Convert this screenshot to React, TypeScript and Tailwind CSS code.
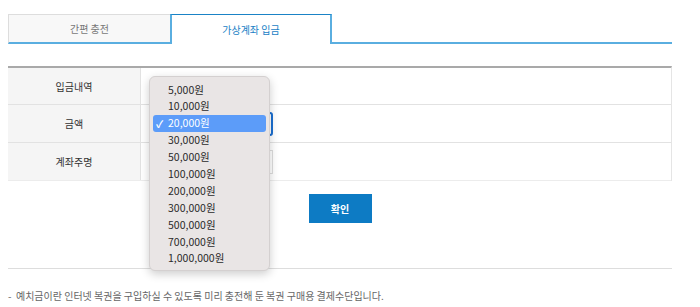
import React from 'react';

const amounts = ['5,000원', '10,000원', '20,000원', '30,000원', '50,000원', '100,000원', '200,000원', '300,000원', '500,000원', '700,000원', '1,000,000원'];

const font = { fontFamily: '"Noto Sans CJK KR", "Noto Sans", sans-serif' };

const App: React.FC = () => {
    return (
        <div className="relative w-[700px] h-[307px] bg-white text-[10px] text-[#333]" style={font}>
            <div className="px-2 pt-[14px]">
                {/* tabs */}
                <div className="flex w-[664px] h-[30px]">
                    <div className="w-[162px] flex items-center justify-center bg-[#f8f8f8] border-t border-l border-[#dddddd] border-b-2 border-b-[#5aaee0] text-[#777]">간편 충전</div>
                    <div className="w-[162px] flex items-center justify-center bg-white border-t border-t-[#1a83c6] border-x-2 border-x-[#5aaee0] text-[#1a7fc6]">가상계좌 입금</div>
                    <div className="flex-1 border-b-2 border-b-[#5aaee0]"></div>
                </div>

                {/* table */}
                <div className="mt-[22px] w-[664px] border-t-2 border-t-[#a9a9a9] border-r border-r-[#e5e5e5]">
                    <div className="flex h-[37px] border-b border-[#e2e2e2]">
                        <div className="w-[133px] flex items-center justify-center bg-[#f5f5f5] border-r border-[#e2e2e2]">입금내역</div>
                        <div className="flex-1"></div>
                    </div>
                    <div className="flex h-[38px] border-b border-[#e2e2e2]">
                        <div className="w-[133px] flex items-center justify-center bg-[#f5f5f5] border-r border-[#e2e2e2]">금액</div>
                        <div className="flex-1 flex items-center pl-[8px]">
                            <div className="w-[124px] h-[24px] border-2 border-[#1b6fd1] rounded-[3px]"></div>
                        </div>
                    </div>
                    <div className="flex h-[38px] border-b border-[#ececec]">
                        <div className="w-[133px] flex items-center justify-center bg-[#f5f5f5] border-r border-[#e2e2e2]">계좌주명</div>
                        <div className="flex-1 flex items-center pl-[8px]">
                            <div className="w-[124px] h-[24px] border border-[#dddddd]"></div>
                        </div>
                    </div>
                </div>

                <div className="flex justify-center w-[664px] mt-[13px]">
                    <button className="w-[63px] h-[29px] bg-[#0d7bc4] text-white font-bold text-[10px]">확인</button>
                </div>

                <div className="mt-[45px] w-[664px] border-t border-[#dddddd]"></div>
                <p className="mt-[19px] text-[10px] text-[#666]">-&nbsp; 예치금이란 인터넷 복권을 구입하실 수 있도록 미리 충전해 둔 복권 구매용 결제수단입니다.</p>
            </div>

            {/* open select popup */}
            <div className="absolute left-[149px] top-[76px] w-[121px] h-[195px] bg-[#e9e5e5] rounded-[6px] border border-[#d4d0d0] shadow-[0_3px_10px_rgba(0,0,0,0.2)] px-[3px] pt-[4px]">
                {amounts.map((a, i) => (
                    <div
                        key={a}
                        className={`h-[16.9px] flex items-center rounded-[3px] text-[10.5px] ${i === 2 ? 'bg-[#5c9cf9] text-white' : 'text-[#2a2a2a]'}`}
                    >
                        <span className="w-[15px] pl-[3px] text-[10px] font-bold">{i === 2 ? '✓' : ''}</span>
                        <span>{a}</span>
                    </div>
                ))}
            </div>
        </div>
    );
};

export default App;
